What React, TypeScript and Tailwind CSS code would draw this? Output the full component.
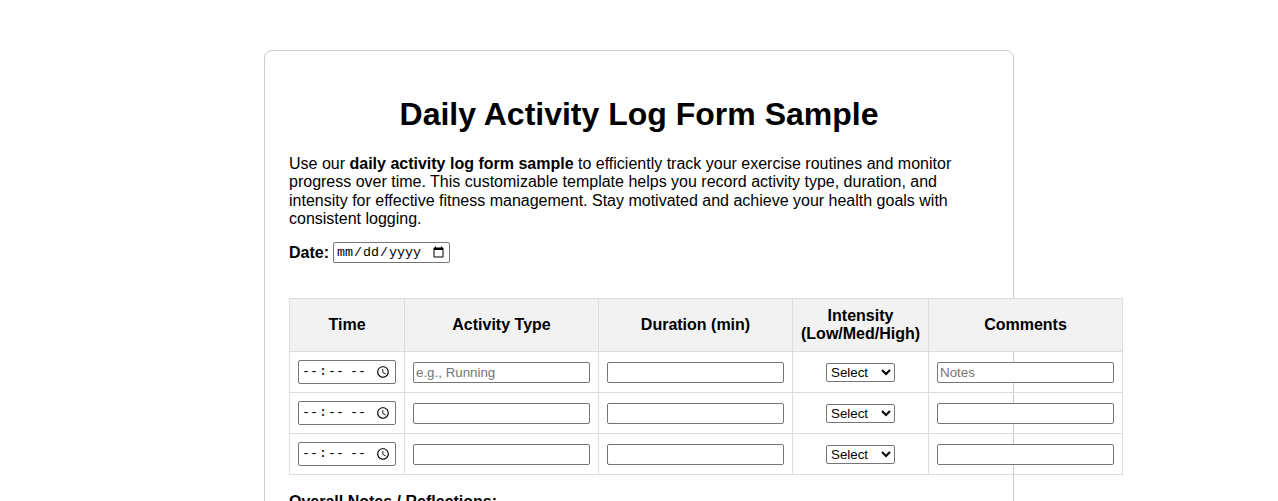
import React from 'react';

const columns = [
    { label: 'Time', width: 'w-[115px]' },
    { label: 'Activity Type', width: 'w-[194px]' },
    { label: 'Duration (min)', width: 'w-[194px]' },
    { label: 'Intensity (Low/Med/High)', width: 'w-[136px]' },
    { label: 'Comments', width: 'w-[194px]' },
];

const rows = [
    { activity: 'e.g., Running', notes: 'Notes' },
    { activity: '', notes: '' },
    { activity: '', notes: '' },
];

const textInput =
    'block w-full h-[21px] border border-[#767676] rounded-[2px] px-[2px] text-[13.33px] bg-white placeholder:text-[#757575]';

const App: React.FC = () => {
    return (
        <div className="min-h-screen bg-white text-black font-['Liberation_Sans',Arial,sans-serif]">
            {/* Card */}
            <div className="mx-auto mt-[50px] w-[750px] border border-[#cccccc] rounded-lg p-6">
                <h1 className="mt-[21px] mb-[22px] text-center text-[32px] font-bold leading-[1.15]">
                    Daily Activity Log Form Sample
                </h1>

                <p className="text-base leading-[1.15]">
                    Use our <strong>daily activity log form sample</strong> to efficiently track your exercise routines
                    and monitor progress over time. This customizable template helps you record activity type, duration,
                    and intensity for effective fitness management. Stay motivated and achieve your health goals with
                    consistent logging.
                </p>

                {/* Date */}
                <div className="mt-[14px] flex items-center gap-1 h-[21px]">
                    <label className="font-bold text-base leading-[1.15]">Date:</label>
                    <input
                        type="date"
                        className="w-[117px] h-[21px] border border-[#767676] rounded-[2px] pl-[2px] pr-[2px] bg-white font-['Liberation_Mono',monospace] text-[13.33px]"
                    />
                </div>

                {/* Log table */}
                <table className="mt-[35px] w-[833px] table-fixed border-collapse">
                    <thead>
                        <tr>
                            {columns.map((col) => (
                                <th
                                    key={col.label}
                                    className={`${col.width} border border-[#dddddd] bg-[#f2f2f2] p-2 text-center text-base font-bold leading-[18px]`}
                                >
                                    {col.label}
                                </th>
                            ))}
                        </tr>
                    </thead>
                    <tbody>
                        {rows.map((row, i) => (
                            <tr key={i}>
                                <td className="border border-[#dddddd] p-2">
                                    <input
                                        type="time"
                                        className="block w-[98px] h-[24px] border border-[#767676] rounded-[2px] px-[2px] bg-white font-['Liberation_Mono',monospace] text-[13.33px]"
                                    />
                                </td>
                                <td className="border border-[#dddddd] p-2">
                                    <input type="text" placeholder={row.activity} className={textInput} />
                                </td>
                                <td className="border border-[#dddddd] p-2">
                                    <input type="number" className={textInput} />
                                </td>
                                <td className="border border-[#dddddd] p-2 text-center">
                                    <select className="w-[69px] h-[19px] border border-[#767676] rounded-[2px] bg-white text-[13.33px]">
                                        <option>Select</option>
                                        <option>Low</option>
                                        <option>Medium</option>
                                        <option>High</option>
                                    </select>
                                </td>
                                <td className="border border-[#dddddd] p-2">
                                    <input type="text" placeholder={row.notes} className={textInput} />
                                </td>
                            </tr>
                        ))}
                    </tbody>
                </table>

                {/* Notes */}
                <div className="mt-[18px]">
                    <label className="block font-bold text-base leading-[1.15]">Overall Notes / Reflections:</label>
                    <textarea className="mt-2 block w-full h-[100px] border border-[#767676] rounded-[2px] p-1 text-[13.33px]" />
                </div>
            </div>
        </div>
    );
};

export default App;
